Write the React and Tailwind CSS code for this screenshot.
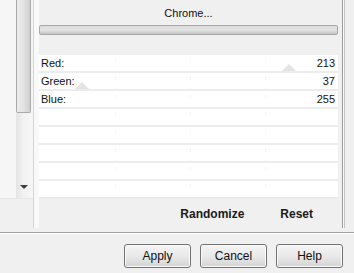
import React from "react";

const rows = [
  { label: "Red:", value: 213 },
  { label: "Green:", value: 37 },
  { label: "Blue:", value: 255 },
  null, null, null, null, null,
];

function Row({ row }) {
  return (
    <div className="relative h-[18px] border-b-2 border-[#ececec] bg-white flex items-center justify-between pl-[2px] pr-[3px] text-[11px] text-[#111111] leading-none">
      <span className="absolute left-[76px] top-[3px] h-[4px] w-px bg-[#f5f5f5]" />
      <span className="absolute left-[151px] top-[3px] h-[4px] w-px bg-[#f5f5f5]" />
      <span className="absolute left-[226px] top-[3px] h-[4px] w-px bg-[#f5f5f5]" />
      {row && (
        <>
          {row.value < 255 && (
            <span
              className="absolute bottom-0 w-0 h-0 border-l-[7px] border-r-[7px] border-b-[7px] border-l-transparent border-r-transparent border-b-[#e4e4e4]"
              style={{ left: `${Math.round((row.value / 255) * 299) - 7}px` }}
            />
          )}
          <span className="relative">{row.label}</span>
          <span className="relative">{row.value}</span>
        </>
      )}
    </div>
  );
}

function Button({ children, w }) {
  return (
    <div
      className={`${w} h-[24px] rounded-[3px] border border-[#707070] bg-gradient-to-b from-[#f4f4f4] via-[#e9e9e9] to-[#d4d4d4] flex items-center justify-center text-[12px] text-[#111111] shadow-[inset_0_0_0_1px_#fbfbfb]`}
    >
      {children}
    </div>
  );
}

export default function App() {
  return (
    <div
      className="w-[354px] h-[273px] bg-[#f0f0f0] flex flex-col overflow-hidden"
      style={{ fontFamily: '"Liberation Sans", Arial, sans-serif' }}
    >
      <div className="h-[228px] flex">
        {/* left pane */}
        <div className="w-[34px] flex flex-col border-r border-[#d4d4d4]">
          <div className="h-[198px] flex bg-[#f6f6f6]">
            <div className="w-[16px]" />
            <div className="w-[15px] flex flex-col">
              <div className="h-[113px] border-l border-r border-b border-[#a9a9a9] rounded-b-[2px] bg-gradient-to-r from-[#ececec] via-[#e2e2e2] to-[#cfcfcf]" />
              <div className="flex-1 bg-gradient-to-r from-[#e4e4e4] via-[#f2f2f2] to-[#f6f6f6] flex items-end justify-center pb-[9px]">
                <span className="w-0 h-0 border-l-[4px] border-r-[4px] border-t-[4px] border-l-transparent border-r-transparent border-t-[#3c3c3c]" />
              </div>
            </div>
            <div className="flex-1" />
          </div>
          <div className="flex-1 bg-[#f0f0f0] border-t border-[#e6e6e6]" />
        </div>
        <div className="w-[5px] bg-[#f9f9f9]" />
        {/* right panel */}
        <div className="w-[299px] flex flex-col">
          <div className="h-[55px] bg-[#f0f0f0] flex flex-col">
            <div className="h-[25px] flex items-center justify-center text-[11px] text-[#111111] pt-[1px]">
              Chrome...
            </div>
            <div className="h-[10px] border border-[#a8a8a8] rounded-[2px] bg-gradient-to-b from-[#dcdcdc] via-[#e4e4e4] to-[#c4c4c4]" />
          </div>
          {rows.map((r, i) => (
            <Row key={i} row={r} />
          ))}
          <div className="flex-1 bg-[#f0f0f0] flex items-center justify-end gap-[36px] pr-[25px] text-[12px] font-bold text-[#1a1a1a] pt-[1px]">
            <span>Randomize</span>
            <span>Reset</span>
          </div>
        </div>
        <div className="w-[4px]" />
        <div className="w-[3px] border-l border-r border-l-[#9c9c9c] border-r-[#c4c4c4] bg-[#fafafa]" />
        <div className="flex-1" />
      </div>
      <div className="h-[4px]" />
      <div className="h-px bg-[#a0a0a0]" />
      <div className="h-px bg-white" />
      <div className="flex pl-[124px] pt-[10px] gap-[9px]">
        <Button w="w-[67px]">Apply</Button>
        <Button w="w-[67px]">Cancel</Button>
        <Button w="w-[67px]">Help</Button>
      </div>
    </div>
  );
}
